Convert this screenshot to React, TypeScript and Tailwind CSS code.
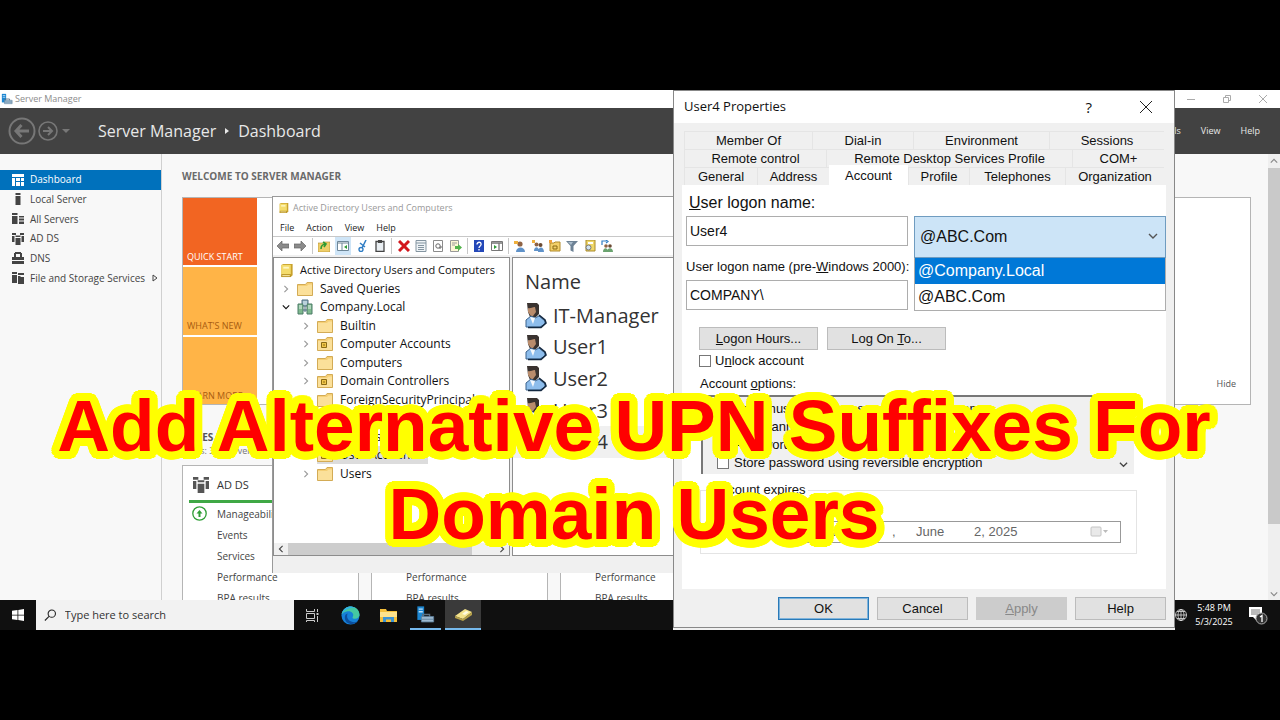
import React, { useState } from 'react';
import clsx from 'clsx';

const NAV_ITEMS = ['Dashboard', 'Local Server', 'All Servers', 'AD DS', 'DNS', 'File and Storage Services'];

const TREE = [
  { label: 'Builtin', kind: 'folder' },
  { label: 'Computer Accounts', kind: 'ou' },
  { label: 'Computers', kind: 'folder' },
  { label: 'Domain Controllers', kind: 'ou' },
  { label: 'ForeignSecurityPrincipals', kind: 'folder' },
  { label: 'Managed Service', kind: 'folder' },
  { label: 'Groups', kind: 'ou' },
  { label: 'User Accounts', kind: 'ou', selected: true },
  { label: 'Users', kind: 'folder' },
];

const USERS = ['IT-Manager', 'User1', 'User2', 'User3', 'User4'];

const TAB_ROWS = [
  [
    { label: 'Member Of', width: 'w-[128px]' },
    { label: 'Dial-in', width: 'w-[101px]' },
    { label: 'Environment', width: 'w-[136px]' },
    { label: 'Sessions', width: 'flex-1' },
  ],
  [
    { label: 'Remote control', width: 'w-[142px]' },
    { label: 'Remote Desktop Services Profile', width: 'w-[246px]' },
    { label: 'COM+', width: 'flex-1' },
  ],
  [
    { label: 'General', width: 'w-[73px]' },
    { label: 'Address', width: 'w-[72px]' },
    { label: 'Account', width: 'w-[79px]' },
    { label: 'Profile', width: 'w-[61px]' },
    { label: 'Telephones', width: 'w-[96px]' },
    { label: 'Organization', width: 'flex-1' },
  ],
];

const OPTIONS = [
  'User must change password at next logon',
  'User cannot change password',
  'Password never expires',
  'Store password using reversible encryption',
];

// Rings of shadows give the banner a round-cornered outline
const outline = (radii: number[], color: string) =>
  radii
    .flatMap(r =>
      Array.from({ length: 32 }, (_, i) => {
        const a = (i / 32) * Math.PI * 2;
        return `${(Math.cos(a) * r).toFixed(1)}px ${(Math.sin(a) * r).toFixed(1)}px 0 ${color}`;
      })
    )
    .join(', ');

const ServerIcon = ({ className }: { className?: string }) => (
  <svg className={className} viewBox="0 0 14 14">
    <path d="M1 1h5v10H1z" fill="#1c86d1" />
    <path d="M2 3h3M2 5h3" stroke="#bfe0f7" strokeWidth="1" />
    <path d="M5 9V7h5v2" fill="none" stroke="#5b6f80" />
    <path d="M4 8.500h9v4H4z" fill="#9db9cf" stroke="#5d7f9b" strokeWidth=".6" />
    <path d="M4 10.500h9" stroke="#5d7f9b" strokeWidth=".6" />
  </svg>
);

const BookIcon = ({ className }: { className?: string }) => (
  <svg className={className} viewBox="0 0 14 16">
    <path d="M1 2l2-1h10v12l-2 2H1z" fill="#c9a22c" />
    <path d="M1 2h10v10H1z" fill="#f4dc6c" />
    <path d="M3 4h6v2H3z" fill="#fdf6c4" />
    <path d="M1 12h10v3H1z" fill="#b99427" />
    <path d="M2 13.500h8" stroke="#fff3b8" />
  </svg>
);

const FolderIcon = ({ ou }: { ou?: boolean }) => (
  <svg className="w-4 h-[14px] shrink-0" viewBox="0 0 16 14">
    <path d="M.5 2.500h8l1.500-2h5.500v13H.5z" fill="#f5cf75" stroke="#d3ab55" />
    <path d="M1 4h9l1.500-1.500H15V13H1z" fill="#fbe09a" />
    {ou && <path d="M4.500 5.500h5v5h-5z" fill="#f0c548" stroke="#8a6a14" />}
    {ou && <path d="M6 8h2" stroke="#8a6a14" />}
  </svg>
);

const DomainIcon = () => (
  <svg className="w-4 h-4 shrink-0" viewBox="0 0 16 16">
    <path d="M5 1h6v6H5z" fill="#8fb3c9" stroke="#54707f" />
    <path d="M1 5h5v10H1zM10 5h5v10h-5z" fill="#7fb98e" stroke="#4a7a66" />
    <path d="M2 7h3M2 9h3M11 7h3M11 9h3M6 3h4M6 5h4" stroke="#e6f3ee" />
    <path d="M8 7v6M6 11h4" stroke="#48687c" />
  </svg>
);

const UserIcon = () => (
  <svg className="w-[22px] h-[27px] shrink-0" viewBox="0 0 22 27">
    <path d="M2 1h10l2 2v9l-3 3H5L3 10z" fill="#3a3330" />
    <path d="M3 6c2 1 4-1 7-1l1 5-3 4H6l-3-4z" fill="#b98c6c" />
    <path d="M1 25V18l5-4 4 2 4-2 6 5v3l-5 3H2z" fill="#8dbdec" stroke="#3b628c" />
    <path d="M5 15l3 7 2-6z" fill="#f4f8fc" />
    <path d="M14 13l6 5 1 3-5 4.500H3" fill="none" stroke="#132840" strokeWidth="1.600" />
  </svg>
);

const NavIcon = ({ name }: { name: string }) => (
  <svg className="w-3 h-3 shrink-0" viewBox="0 0 12 12" fill="currentColor">
    {name === 'Dashboard' && <path d="M0 0h12v3H0zM0 4h3v8H0zM4 4h4v3H4zM9 4h3v3H9zM4 8h4v4H4zM9 8h3v4H9z" />}
    {name === 'Local Server' && <path d="M3.500 0h5v2h-5zM3.500 3h5v9h-5z" />}
    {name === 'All Servers' && <path d="M0 0h5.500v2H0zM0 3h5.500v8H0zM7 3h5v1.500H7zM7 5.500h5v2H7zM7 8.500h5V11H7z" />}
    {name === 'AD DS' && <path d="M0 0h4v2H0zM0 3h2.500v6H0zM8 0h4v2H8zM9.500 3H12v6H9.500zM3.500 2.500h5V4h-5zM3.500 5h5v7h-5z" />}
    {name === 'DNS' && <path d="M3 0h6v1h1v4h2v3H0V5h2V1h1zM4 2v3h4V2zM0 9h12v3H0z" fillRule="evenodd" />}
    {name === 'File and Storage Services' && <path d="M0 0h5v2H0zM0 3h5v8H0zM6 1h6v2H6zM6 4h2l1 1h3v7H6z" />}
  </svg>
);

const Chevron = ({ className }: { className?: string }) => (
  <svg className={className} viewBox="0 0 10 10" fill="none" stroke="currentColor" strokeWidth="1.400">
    <path d="M1 3l4 4 4-4" />
  </svg>
);

const Divider = () => <span className="w-px h-4 bg-[#c8c8c8]" />;

const Toolbar = () => (
  <div className="flex items-center h-[18px] px-[4px] text-[#8a8a8a]">
    <div className="flex items-center justify-between w-[336px]">
      <svg className="w-3 h-3" viewBox="0 0 12 12"><path d="M0 6l5-5v3h7v4H5v3z" fill="#8b8b8b" stroke="#666" strokeWidth=".7" /></svg>
      <svg className="w-3 h-3" viewBox="0 0 12 12"><path d="M12 6L7 1v3H0v4h7v3z" fill="#8b8b8b" stroke="#666" strokeWidth=".7" /></svg>
      <Divider />
      <svg className="w-3 h-3" viewBox="0 0 12 12"><path d="M0 3h5l1-1h6v10H0z" fill="#efcf6a" stroke="#b08a2a" strokeWidth=".6" /><path d="M3 9c0-3 2-5 5-5M5 2l3 2-2 3" stroke="#2d9a35" strokeWidth="1.600" fill="none" /></svg>
      <span className="bg-[#cfe5f7] px-[2px] py-[3px]">
        <svg className="w-3 h-3" viewBox="0 0 12 12"><path d="M.5 1.500h11v9H.5z" fill="#fff" stroke="#6f8798" /><path d="M0 3h12M5 3v8" stroke="#6f8798" /><path d="M7 7l3-2v4z" fill="#2d9a35" /></svg>
      </span>
      <svg className="w-3 h-3" viewBox="0 0 12 12"><path d="M9 0L5 8M3 3l5 4" stroke="#2f7dc4" strokeWidth="1.500" /><circle cx="4" cy="9.500" r="2" fill="none" stroke="#2f7dc4" strokeWidth="1.400" /></svg>
      <svg className="w-3 h-3" viewBox="0 0 12 12"><path d="M2 1.500h8v10H2z" fill="#e9eef2" stroke="#454545" strokeWidth="1.300" /><path d="M4 0h4v3H4z" fill="#454545" /></svg>
      <Divider />
      <svg className="w-3 h-3" viewBox="0 0 12 12"><path d="M1 1l10 10M11 1L1 11" stroke="#d3161c" strokeWidth="3" /></svg>
      <svg className="w-3 h-3" viewBox="0 0 12 12"><path d="M1 .5h10v11H1z" fill="#eef3f6" stroke="#8495a1" /><path d="M1 3h10M3 5.500h6M3 7.500h6M3 9.500h6" stroke="#8495a1" /></svg>
      <svg className="w-3 h-3" viewBox="0 0 12 12"><path d="M1.500.5h9v11h-9z" fill="#fff" stroke="#8b8b8b" /><circle cx="6" cy="6" r="2.200" fill="none" stroke="#666" /><path d="M7 8h2V6" stroke="#666" fill="none" /></svg>
      <svg className="w-3 h-3" viewBox="0 0 12 12"><path d="M.5.5h8v11h-8z" fill="#fdf7d5" stroke="#999" /><path d="M2 3h5M2 5h3" stroke="#999" /><path d="M5 6h3V4l4 3.500L8 11V9H5z" fill="#52b34b" /></svg>
      <Divider />
      <svg className="w-3 h-3" viewBox="0 0 12 12"><path d="M1 0h10v12H1z" fill="#2448b8" /><path d="M4 4.500c0-3 4.500-3 4 0C8.300 6 6 6 6 8M6 9v1.500" stroke="#fff" strokeWidth="1.300" fill="none" /></svg>
      <svg className="w-3 h-3" viewBox="0 0 12 12"><path d="M.5 1.500h11v9H.5z" fill="#fff" stroke="#777" /><path d="M0 3h12M8 3v8" stroke="#777" strokeWidth="1.300" /><path d="M6 7L3 5v4z" fill="#2d9a35" /></svg>
      <Divider />
      <svg className="w-3 h-3" viewBox="0 0 12 12"><circle cx="6" cy="4" r="2.600" fill="#8f6345" /><path d="M2 12c0-6 9-6 9 0z" fill="#5f92c9" /><path d="M0 1h4v3H0z" fill="#f0b03c" /></svg>
      <svg className="w-3 h-3" viewBox="0 0 12 12"><circle cx="4.500" cy="4.500" r="2" fill="#8f6345" /><circle cx="8.500" cy="5" r="2" fill="#6b4a33" /><path d="M2 11c0-5 5-5 5 0zM6 12c0-6 6-6 6 0z" fill="#5f92c9" /><path d="M0 0h3v3H0z" fill="#f0b03c" /></svg>
      <svg className="w-3 h-3" viewBox="0 0 12 12"><path d="M1 3h4l1-1h5v9H1z" fill="#f3d069" stroke="#b08a2a" /><path d="M4 6h4v3H4z" fill="none" stroke="#8a6a14" /><path d="M0 0h3v3H0z" fill="#f0a03c" /></svg>
      <svg className="w-3 h-3" viewBox="0 0 12 12"><path d="M0 1h12L7.500 6v6l-3-1.500V6z" fill="#6d8295" /><path d="M2 2h5L5 5z" fill="#a9bccb" /></svg>
      <svg className="w-3 h-3" viewBox="0 0 12 12"><path d="M2 0h9v11H2z" fill="#efd768" stroke="#a98a2a" /><path d="M4 2h5v2H4z" fill="#fff" /><circle cx="4.500" cy="7.500" r="2.500" fill="#cfe2f1" stroke="#777" /></svg>
      <svg className="w-3 h-3" viewBox="0 0 12 12"><path d="M1 5V1h5M5 0l2 1.500L5 3" stroke="#2f7dc4" fill="none" strokeWidth="1.200" /><circle cx="5" cy="6" r="1.800" fill="#8f6345" /><circle cx="9" cy="6" r="1.800" fill="#6b4a33" /><path d="M2 12c0-5 5-5 5 0zM6 12c0-5 6-5 6 0z" fill="#6aa36f" /></svg>
    </div>
  </div>
);

const RoleCard = ({ title }: { title: string }) => (
  <section className="w-[177px] shrink-0 h-60 bg-white border border-[#b5b5b5] px-1.5 pt-[7px] text-[10px] text-[#444]">
    <h3 className="flex items-center h-6 pl-1 gap-2 text-[11px] text-[#333]">
      <svg className="w-4 h-4 text-[#555]" viewBox="0 0 12 12" fill="currentColor">
        <path d="M0 0h4v2H0zM0 3h2.500v6H0zM8 0h4v2H8zM9.500 3H12v6H9.500zM3.500 2.500h5V4h-5zM3.500 5h5v7h-5z" />
      </svg>
      {title}
    </h3>
    <div className="h-[3px] mt-[3px] bg-[#3fa845]" />
    <ul className="pl-7">
      <li className="relative h-[21px] leading-[22px]">
        <svg className="absolute -left-[25px] top-[3px] w-[15px] h-[15px]" viewBox="0 0 15 15" fill="none" stroke="#2f9e36">
          <circle cx="7.500" cy="7.500" r="6.700" strokeWidth="1.300" />
          <path d="M7.500 11V6" strokeWidth="2" />
          <path d="M4.500 7.500l3-3.500 3 3.500z" fill="#2f9e36" stroke="none" />
        </svg>
        Manageability
      </li>
      <li className="h-[21px] leading-[22px]">Events</li>
      <li className="h-[21px] leading-[22px]">Services</li>
      <li className="h-[21px] leading-[22px]">Performance</li>
      <li className="h-[21px] leading-[22px]">BPA results</li>
    </ul>
  </section>
);

const ServerManager = () => (
  <div className="flex flex-col flex-1 min-h-0 bg-[#f8f8f8]">
    <header>
      <div className="flex items-center h-[18px] bg-white pl-px text-[9px] text-[#8c8c8c]">
        <ServerIcon className="w-3 h-3" />
        <span className="ml-[2px]">Server Manager</span>
        <div className="ml-auto mr-3 flex items-center gap-[26px] text-[#aaa]">
          <button aria-label="Minimize"><svg className="w-[10px] h-[10px]" viewBox="0 0 10 10" stroke="currentColor"><path d="M1 5.500h8" /></svg></button>
          <button aria-label="Restore"><svg className="w-[10px] h-[10px]" viewBox="0 0 10 10" stroke="currentColor" fill="none"><path d="M1.500 3.500h5v5h-5zM3.500 3V1.500h5v5H7" /></svg></button>
          <button aria-label="Close"><svg className="w-[10px] h-[10px]" viewBox="0 0 10 10" stroke="currentColor"><path d="M1 1l8 8M9 1L1 9" /></svg></button>
        </div>
      </div>
      <div className="flex items-center h-[46px] bg-[#424242] pl-2 pr-5 text-[#e8e8e8]">
        <button aria-label="Back">
          <svg className="w-7 h-7" viewBox="0 0 28 28" fill="none" stroke="#777" strokeWidth="2"><circle cx="14" cy="14" r="12.500" /><path d="M21 14H8M13.500 8L8 14l5.500 6" strokeWidth="3" /></svg>
        </button>
        <button aria-label="Forward" className="ml-[2px]">
          <svg className="w-5 h-5" viewBox="0 0 20 20" fill="none" stroke="#777" strokeWidth="1.600"><circle cx="10" cy="10" r="9" /><path d="M5 10h9M10 6l4 4-4 4" strokeWidth="2" /></svg>
        </button>
        <svg className="w-2 h-2 ml-1" viewBox="0 0 8 8" fill="#777"><path d="M0 2h8L4 6z" /></svg>
        <h1 className="flex items-center ml-7 text-base">
          Server Manager
          <svg className="w-[6px] h-[8px] mx-2" viewBox="0 0 6 8" fill="currentColor"><path d="M1 1l4 3-4 3z" /></svg>
          Dashboard
        </h1>
        <nav className="ml-auto flex gap-5 text-[9px]">
          <a href="#manage">Manage</a>
          <a href="#tools">Tools</a>
          <a href="#view">View</a>
          <a href="#help">Help</a>
        </nav>
      </div>
    </header>
    <div className="flex flex-1 min-h-0">
      <nav className="w-[162px] shrink-0 border-r border-[#d0d0d0] pt-4">
        <ul className="grid grid-cols-1 grid-rows-6 h-[118px] text-[10px] text-[#444]">
          {NAV_ITEMS.map((item, i) => (
            <li key={item}>
              <a
                href="#nav"
                className={clsx('flex items-center h-full pl-3 gap-1.5 whitespace-nowrap', i === 0 && 'bg-[#0071bc] text-white')}
              >
                <NavIcon name={item} />
                {item}
                {i === 5 && (
                  <svg className="w-[6px] h-[8px] ml-auto mr-[3px]" viewBox="0 0 6 8" fill="none" stroke="#444"><path d="M1 1l4 3-4 3z" /></svg>
                )}
              </a>
            </li>
          ))}
        </ul>
      </nav>
      <main className="flex-1 min-w-0 overflow-hidden pl-5 pr-[17px]">
        <h2 className="pt-3.5 text-[10px] leading-4 font-bold text-[#6a6a6a]">WELCOME TO SERVER MANAGER</h2>
        <div className="mt-[13px] h-[208px] flex items-end bg-white border border-[#b5b5b5]">
          <div className="w-[74px] h-full grid grid-rows-3 gap-[2px] text-[9px] whitespace-nowrap">
            <div className="flex items-end bg-[#f26522] text-white pl-1 pb-[2px]">QUICK START</div>
            <div className="flex items-end bg-[#ffb447] text-[#a85c10] pl-1 pb-[2px]">WHAT'S NEW</div>
            <div className="flex items-end bg-[#ffb447] text-[#a85c10] pl-1 pb-[2px]">LEARN MORE</div>
          </div>
          <button className="ml-auto mr-3.5 mb-3.5 text-[9px] text-[#555]">Hide</button>
        </div>
        <h2 className="mt-6 text-[10px] leading-4 font-bold text-[#555]">ROLES AND SERVER GROUPS</h2>
        <p className="text-[9px] leading-3 text-[#777]">Roles: 3 | Server groups: 1</p>
        <div className="mt-2 flex gap-3">
          <RoleCard title="AD DS" />
          <RoleCard title="DNS" />
          <RoleCard title="File and Storage Services" />
        </div>
      </main>
      <div className="w-3 shrink-0 flex flex-col items-center bg-[#efefef] text-[#888]">
        <Chevron className="w-2 h-2 my-[3px] rotate-180" />
        <div className="w-full h-[356px] bg-[#c9c9c9]" />
        <Chevron className="w-2 h-2 mt-auto mb-[2px]" />
      </div>
    </div>
  </div>
);

const DirectoryWindow = () => (
  <section className="absolute left-[272px] top-[106px] w-[420px] h-[377px] flex flex-col bg-white border-l border-t border-[#9a9a9a]">
    <div className="flex items-center h-[22px] pl-[6px] text-[9px] text-[#999]">
      <BookIcon className="w-[10px] h-[12px]" />
      <span className="ml-[4px]">Active Directory Users and Computers</span>
    </div>
    <div className="flex items-center h-[18px] pl-[7px] gap-3 text-[9px] text-[#222] border-b border-[#c8c8c8]">
      <button>File</button>
      <button>Action</button>
      <button>View</button>
      <button>Help</button>
    </div>
    <Toolbar />
    <div className="flex flex-1 min-h-0 gap-[2px] bg-[#f0f0f0] pt-[2px]">
      <div className="w-[237px] flex flex-col bg-white border border-[#8d8d8d] text-[12px] text-[#111]">
        <ul className="grid grid-rows-12 h-[222px] mt-[3px] whitespace-nowrap overflow-hidden">
          <li className="flex items-center pl-[6px] text-[11px]">
            <BookIcon className="w-[14px] h-[15px] mr-[6px] shrink-0" />
            Active Directory Users and Computers
          </li>
          <li className="flex items-center pl-[8px] gap-[7px]">
            <Chevron className="w-2 h-2 -rotate-90 text-[#999]" />
            <FolderIcon />
            Saved Queries
          </li>
          <li className="flex items-center pl-[8px] gap-[7px]">
            <Chevron className="w-2 h-2" />
            <DomainIcon />
            Company.Local
          </li>
          {TREE.map(node => (
            <li key={node.label} className="flex items-center pl-[28px] gap-[7px]">
              <Chevron className={clsx('w-2 h-2 -rotate-90 text-[#999]', node.selected && 'invisible')} />
              <span className={clsx('flex items-center gap-[7px]', node.selected && 'bg-[#dcdcdc] pr-2')}>
                <FolderIcon ou={node.kind === 'ou'} />
                {node.label}
              </span>
            </li>
          ))}
        </ul>
        <div className="mt-auto h-3 flex items-center bg-[#f0f0f0] text-[#444] px-[3px]">
          <Chevron className="w-2 h-2 rotate-90" />
          <div className="ml-[3px] w-[184px] h-full bg-[#cdcdcd]" />
          <Chevron className="w-2 h-2 -rotate-90 ml-auto" />
        </div>
      </div>
      <div className="flex-1 bg-white border border-[#8d8d8d] text-[20px] text-[#333]">
        <h2 className="pl-3 pt-[10px] leading-7">Name</h2>
        <ul className="grid grid-rows-5 h-[158px] mt-1">
          {USERS.map(user => (
            <li key={user} className={clsx('flex items-center gap-1.5 pl-3', user === 'User4' && 'bg-[#f0f0f0]')}>
              <UserIcon />
              {user}
            </li>
          ))}
        </ul>
      </div>
    </div>
    <div className="h-[17px] bg-[#f0f0f0]" />
  </section>
);

const PropertiesDialog = () => {
  const [tab, setTab] = useState('Account');
  const [suffix, setSuffix] = useState('@ABC.Com');

  return (
    <section className="absolute inset-y-0 left-[673px] w-[502px] pb-[2px] bg-[#f0f0f0] text-[13px] text-[#111] font-['Liberation_Sans',Arial,sans-serif]">
      <div className="flex flex-col h-full border border-[#888]">
        <div className="flex items-center h-8 px-[10px] bg-white font-['Open_Sans',sans-serif]">
          <h2 className="text-[13px]">User4 Properties</h2>
          <button className="ml-auto text-[15px]">?</button>
          <button aria-label="Close" className="ml-12 mr-[12px]">
            <svg className="w-3 h-3" viewBox="0 0 12 12" stroke="#222"><path d="M0 0l12 12M12 0L0 12" /></svg>
          </button>
        </div>
        <div className="flex flex-col flex-1 min-h-0 px-[8px] pt-[8px]">
          <div role="tablist" className="px-[2px]">
            {TAB_ROWS.map((row, i) => (
              <div key={i} className="flex h-[18px] items-end">
                {row.map(({ label, width }) => (
                  <button
                    key={label}
                    role="tab"
                    aria-selected={tab === label}
                    onClick={() => setTab(label)}
                    className={clsx(
                      'leading-[17px] whitespace-nowrap',
                      width,
                      tab === label ? 'h-[20px] bg-white' : 'h-[18px] border-l border-t border-[#e5e5e5]'
                    )}
                  >
                    {label}
                  </button>
                ))}
              </div>
            ))}
          </div>
          <div className="flex-1 bg-white pl-[4px] pt-[8px]">
            <label htmlFor="logon" className="block pl-[3px] text-[16px] leading-5"><u>U</u>ser logon name:</label>
            <div className="flex gap-[6px] mt-[3px] text-[14px]">
              <div className="w-[222px] shrink-0">
                <input id="logon" defaultValue="User4" className="block w-full h-[30px] px-[3px] bg-white border border-[#adadad]" />
                <label htmlFor="legacy" className="block mt-[11px] leading-5 whitespace-nowrap text-[13px]">User logon name (pre-<u>W</u>indows 2000):</label>
                <input id="legacy" defaultValue={'COMPANY\\'} className="block w-full h-[30px] mt-[3px] px-[3px] bg-white border border-[#adadad]" />
              </div>
              <div className="flex-1 text-[16px]">
                <div className="relative">
                  <select
                    aria-label="UPN suffix"
                    value={suffix}
                    onChange={e => setSuffix(e.target.value)}
                    className="block w-full h-[42px] pl-[5px] appearance-none bg-[#cce4f7] border border-[#6f9cc0]"
                  >
                    <option>@Company.Local</option>
                    <option>@ABC.Com</option>
                  </select>
                  <Chevron className="absolute right-2 top-[15px] w-[10px] h-[10px] text-[#555]" />
                </div>
                <ul role="listbox" className="border border-t-0 border-[#adadad] leading-[26px]">
                  <li role="option" aria-selected="true" className="pl-[3px] bg-[#0078d7] text-white">@Company.Local</li>
                  <li role="option" aria-selected="false" className="pl-[3px]">@ABC.Com</li>
                </ul>
              </div>
            </div>
            <div className="flex gap-[9px] mt-4 pl-[13px]">
              <button className="w-[119px] h-[23px] bg-[#e1e1e1] border border-[#bcbcbc]"><u>L</u>ogon Hours...</button>
              <button className="w-[119px] h-[23px] bg-[#e1e1e1] border border-[#bcbcbc]">Log On <u>T</u>o...</button>
            </div>
            <label className="flex items-center gap-1 h-4 mt-[3px] pl-[13px]">
              <input type="checkbox" className="appearance-none w-3 h-3 bg-white border border-[#777]" />
              <span>U<u>n</u>lock account</span>
            </label>
            <p className="mt-[7px] pl-[14px] leading-4">Account <u>o</u>ptions:</p>
            <div className="relative w-[433px] h-[79px] ml-[15px] mt-[3px] pt-[3px] pl-[14px] bg-[#f0f0f0] border-t-2 border-l-2 border-[#777]">
              {OPTIONS.map(option => (
                <label key={option} className="flex items-center gap-[5px] h-[18px]">
                  <input type="checkbox" className="appearance-none w-3 h-3 bg-white border border-[#777]" />
                  {option}
                </label>
              ))}
              <Chevron className="absolute right-[6px] bottom-[5px] w-[9px] h-[9px] text-[#444]" />
            </div>
            <fieldset className="w-[437px] h-[72px] ml-[14px] mt-[8px] pl-[10px] pr-[15px] border border-[#e4e4e4]">
              <legend className="px-[2px] leading-4">Account expires</legend>
              <label className="flex items-center gap-1 h-4"><input type="radio" name="expires" defaultChecked className="w-3 h-3" />Never</label>
              <div className="flex items-center mt-[7px]">
                <label className="flex items-center gap-1 w-[80px]"><input type="radio" name="expires" className="w-3 h-3" />End of:</label>
                <div className="flex flex-1 items-center h-[22px] px-2 border border-[#999] text-[#666]">
                  <span className="w-[92px]">Monday</span>
                  <span className="w-[24px]">,</span>
                  <span className="w-[58px]">June</span>
                  <span>2, 2025</span>
                  <svg className="ml-auto mr-1 w-[18px] h-[12px]" viewBox="0 0 18 12"><rect x="1" y="1" width="10" height="9" rx="1" fill="#e9e9e9" stroke="#c4c4c4" /><path d="M13 4h5l-2.500 3z" fill="#bbb" /></svg>
                </div>
              </div>
            </fieldset>
          </div>
        </div>
        <div className="flex justify-end gap-[8px] h-[38px] pt-[8px] pr-[8px]">
          <button className="w-[91px] h-[23px] bg-[#e1e1e1] border border-[#2a7ab8] ring-1 ring-inset ring-[#7fb4dc]">OK</button>
          <button className="w-[91px] h-[23px] bg-[#e1e1e1] border border-[#bcbcbc]">Cancel</button>
          <button disabled className="w-[91px] h-[23px] bg-[#cccccc] text-[#888]"><u>A</u>pply</button>
          <button className="w-[91px] h-[23px] bg-[#e1e1e1] border border-[#bcbcbc]">Help</button>
        </div>
      </div>
    </section>
  );
};

const Taskbar = () => (
  <footer className="flex items-center h-[30px] shrink-0 bg-[#101010] text-white">
    <button aria-label="Start" className="w-9 flex justify-center">
      <svg className="w-3 h-3" viewBox="0 0 12 12" fill="currentColor"><path d="M0 1.800l5.500-.8v4.700H0zM6.300.9L12 0v5.700H6.300zM0 6.400h5.500V11L0 10.200zM6.300 6.400H12V12l-5.700-.9z" /></svg>
    </button>
    <label className="flex items-center w-[258px] h-full pl-2 bg-[#f2f2f2] text-[#222]">
      <svg className="w-[14px] h-[14px]" viewBox="0 0 14 14" fill="none" stroke="currentColor" strokeWidth="1.200"><circle cx="8.500" cy="5.500" r="4" /><path d="M5.500 8.500L1 13" /></svg>
      <input aria-label="Search" placeholder="Type here to search" className="ml-2 w-full text-[11px] bg-transparent placeholder:text-[#333]" />
    </label>
    <button aria-label="Task View" className="w-9 flex justify-center">
      <svg className="w-[13px] h-[13px]" viewBox="0 0 13 13" fill="none" stroke="#ccc"><path d="M.5 0v2.500h8V0M.5 4.500h8v5h-8zM.5 13v-1.500h8V13M11.500 0v3M11.500 7v6" /><path d="M10.500 5h2" strokeWidth="2" /></svg>
    </button>
    <button aria-label="Edge" className="w-10 flex justify-center">
      <svg className="w-[19px] h-[19px]" viewBox="0 0 20 20">
        <circle cx="10" cy="10" r="9.500" fill="#1681d8" />
        <path d="M.6 9C2 3 6 .5 10 .5c6 0 9.500 4.500 9.500 8.500 0 3-2.500 4.500-5 4.500-2 0-3-1-2-2.500C14 8 11 5 7 5.500 4 6 1.500 7.500.6 9z" fill="#45c8a2" />
        <path d="M.6 9C2 3 6 .5 10 .5c2 0 4 .6 5.500 1.500C10 1 3 4 .6 9z" fill="#31b3e6" />
        <path d="M7 8c-2 4 1 9 7 9 2 0 3.500-.8 4.400-2C15 21 4 20 4 12c0-2 1-3.500 3-4z" fill="#0c4f9e" />
      </svg>
    </button>
    <button aria-label="File Explorer" className="w-9 flex justify-center">
      <svg className="w-[17px] h-[15px]" viewBox="0 0 17 15"><path d="M0 1h6l1 2h10v11H0z" fill="#f4bf3a" /><path d="M0 4h17v5H0z" fill="#fde28c" /><path d="M3 14V9h11v5h-3v-2.500H6V14z" fill="#3b93d4" /></svg>
    </button>
    <button aria-label="Server Manager" className="w-[31px] ml-1 h-full flex items-center justify-center border-b-2 border-[#76b9ed]">
      <ServerIcon className="w-[19px] h-[19px]" />
    </button>
    <button aria-label="Active Directory Users and Computers" className="w-9 ml-1 h-full flex items-center justify-center bg-[#3a3a3a] border-b-2 border-[#76b9ed]">
      <svg className="w-[19px] h-[13px]" viewBox="0 0 19 13"><path d="M1 8L11 1l7 3-9 7z" fill="#f3e28b" /><path d="M1 8l8 3 9-7v3l-9 6-8-3z" fill="#b5a04a" /><path d="M8 6l4-3 3 1-4 3z" fill="#fffbe0" /></svg>
    </button>
    <div className="ml-auto flex items-center">
      <svg className="w-3 h-3" viewBox="0 0 12 12" fill="none" stroke="#ddd" strokeWidth=".8"><circle cx="6" cy="6" r="5.500" /><path d="M6 0v12M0 6h12M2 2.500h8M2 9.500h8" /><ellipse cx="6" cy="6" rx="3" ry="5.500" /></svg>
      <time className="w-[54px] text-center text-[9px] leading-[14px]">5:48 PM<br />5/3/2025</time>
      <button aria-label="Notifications" className="ml-[8px] mr-[12px]">
        <svg className="w-[19px] h-[19px]" viewBox="0 0 19 19">
          <path d="M0 1h13v10H8v4l-4-4H0z" fill="#fff" />
          <path d="M2 4h9M2 6h9M2 8h7" stroke="#555" strokeWidth=".8" />
          <circle cx="12.500" cy="12.500" r="5.500" fill="#333" stroke="#aaa" />
          <path d="M11 11l2-1.500V16" stroke="#fff" strokeWidth="1.300" fill="none" />
        </svg>
      </button>
    </div>
  </footer>
);

const App = () => (
  <div className="h-screen bg-black py-[90px] font-['Open_Sans','Segoe_UI',sans-serif]">
    <div className="relative flex flex-col h-full overflow-hidden">
      <ServerManager />
      <Taskbar />
      <DirectoryWindow />
      <PropertiesDialog />
      <h2
        className="absolute inset-x-0 top-[292px] pr-[12px] text-center whitespace-nowrap font-bold text-[73px] leading-[88px] text-[#ff0000] font-['Liberation_Sans',Arial,sans-serif]"
        style={{ textShadow: outline([8, 5, 3], '#ffff00') }}
      >
        Add Alternative UPN Suffixes For<br />Domain Users
      </h2>
    </div>
  </div>
);

export default App;
